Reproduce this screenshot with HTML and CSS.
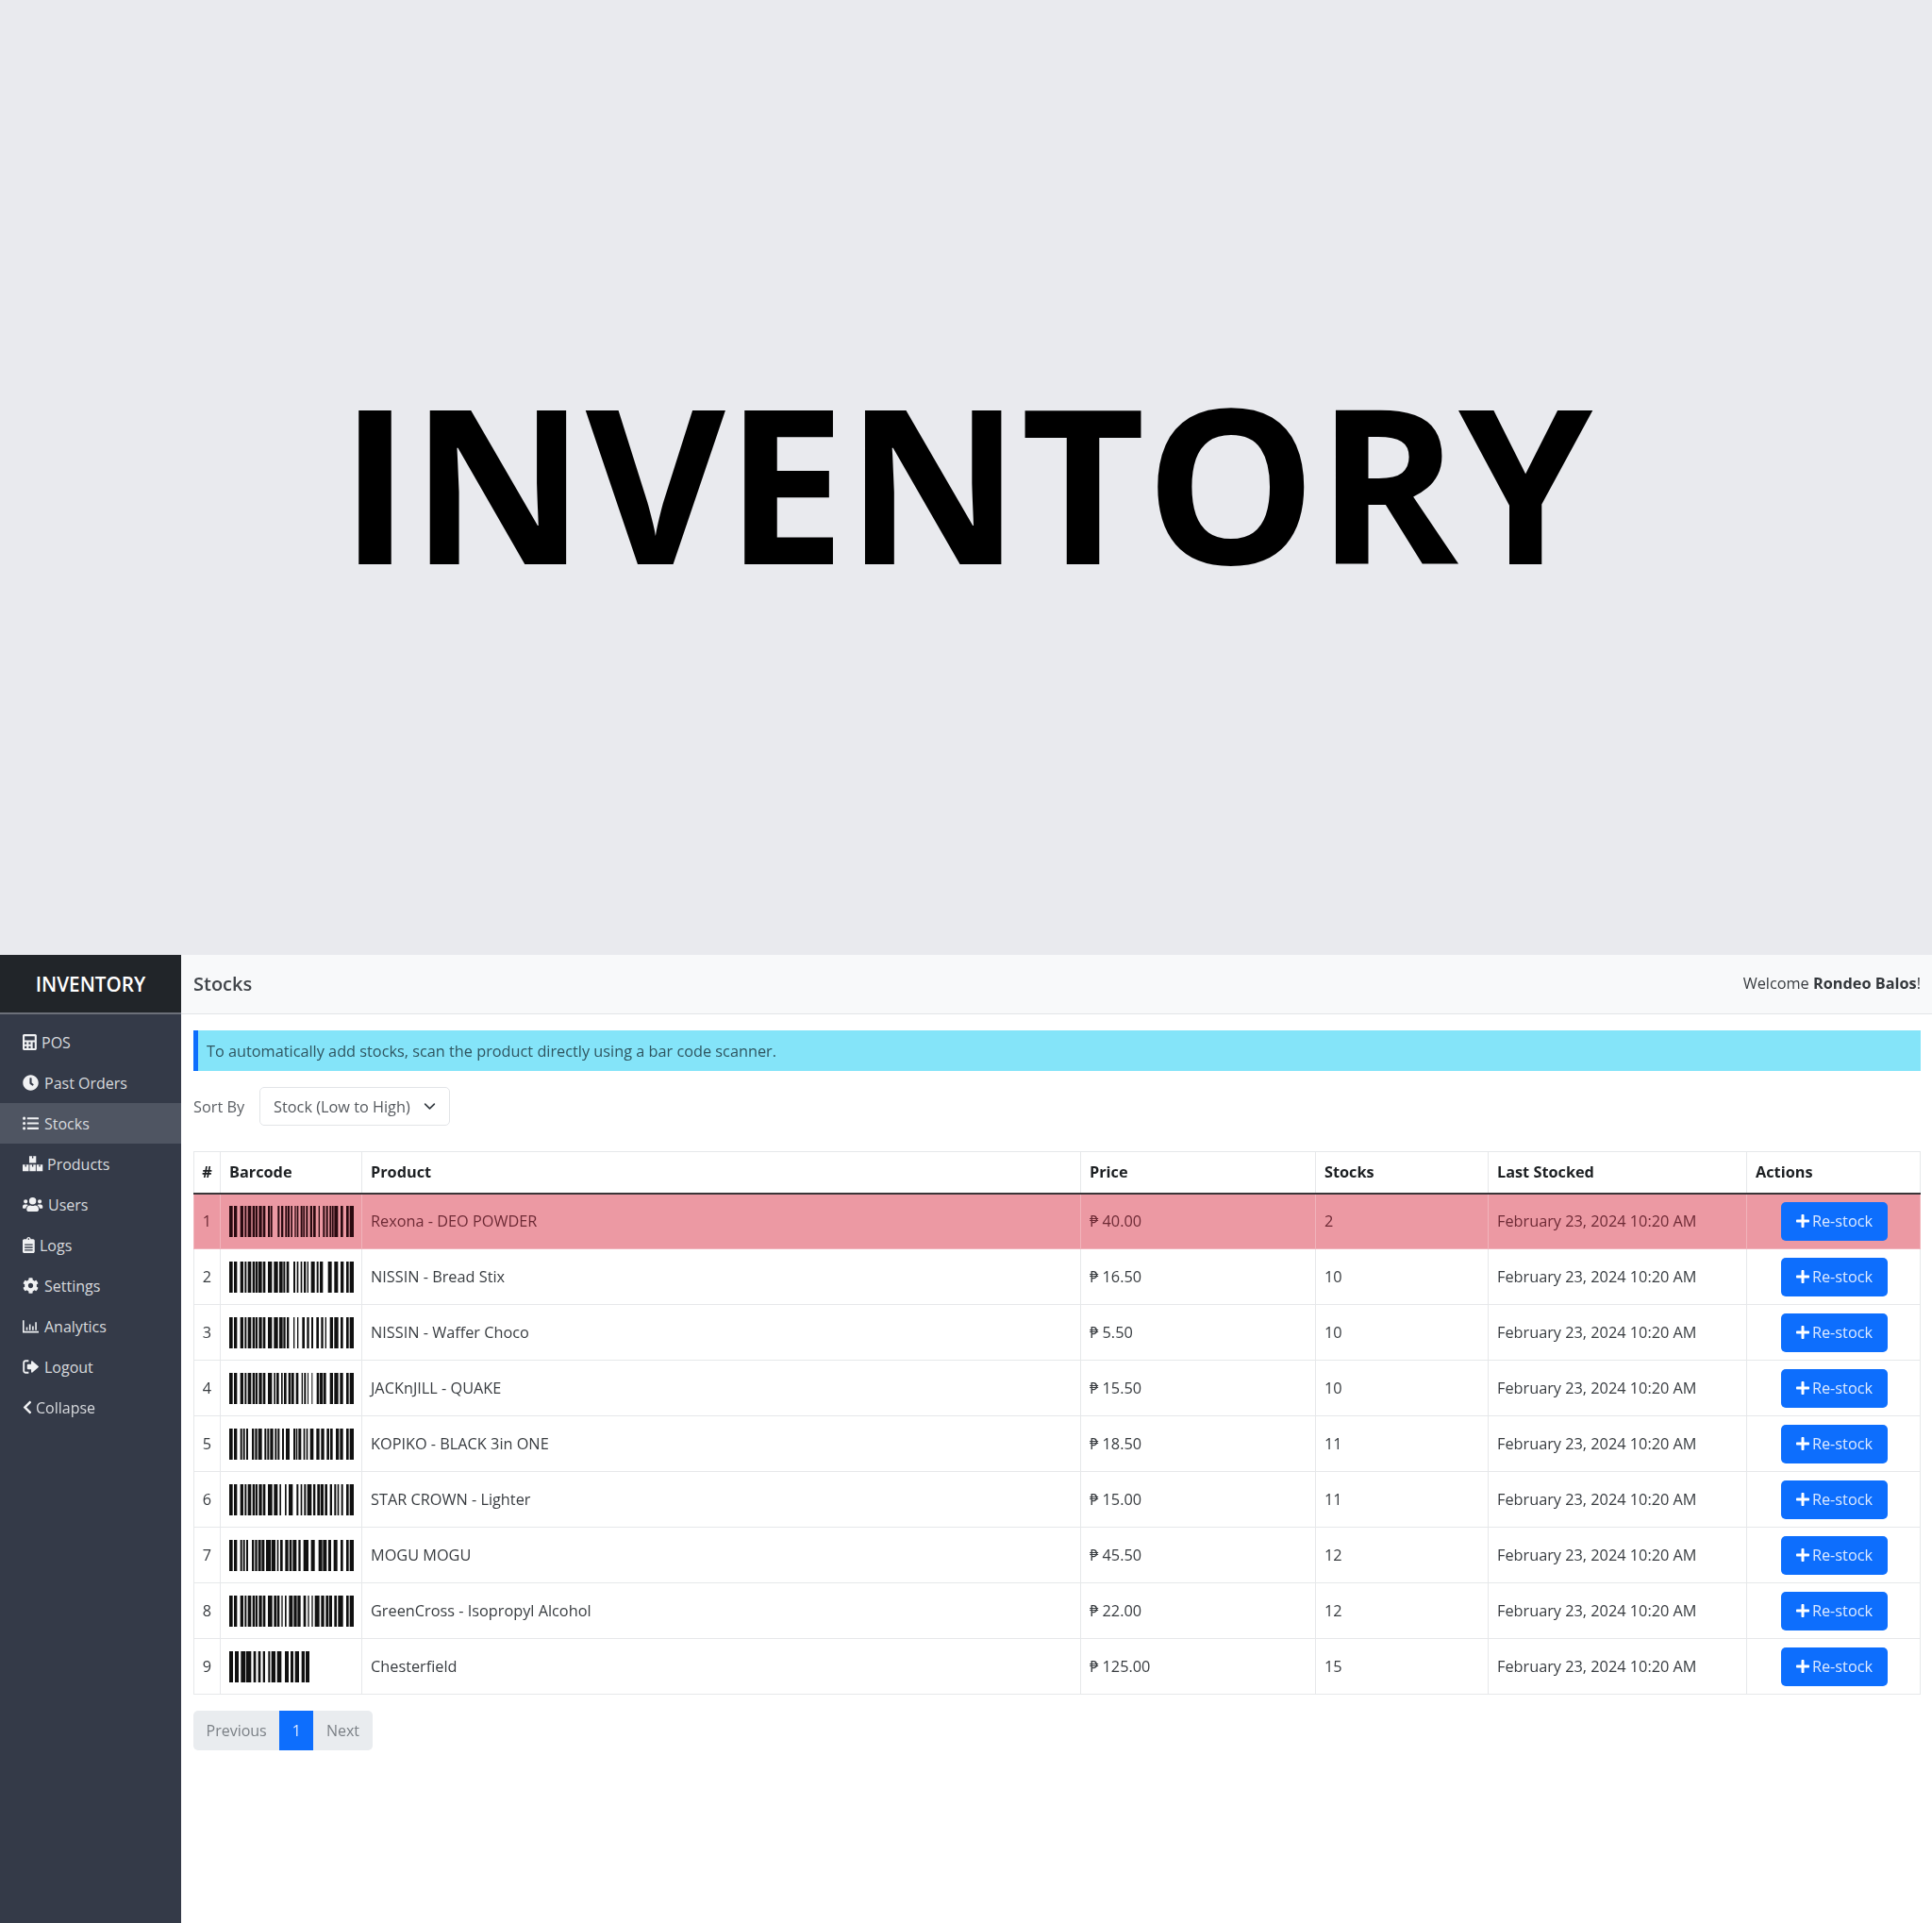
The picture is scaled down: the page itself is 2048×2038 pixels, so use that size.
FILE: index.html
```html
<!DOCTYPE html>
<html lang="en">
<head>
    <meta charset="UTF-8">
    <meta name="viewport" content="width=device-width, initial-scale=1.0">
    <title>Inventory</title>
    <link rel="stylesheet" href="styles.css">
</head>
<body>
    <svg class="icon-defs" width="0" height="0">
        <symbol id="i-plus" viewBox="0 0 448 512"><path d="M416 208H272V64c0-18-14-32-32-32h-32c-18 0-32 14-32 32v144H32c-18 0-32 14-32 32v32c0 18 14 32 32 32h144v144c0 18 14 32 32 32h32c18 0 32-14 32-32V304h144c18 0 32-14 32-32v-32c0-18-14-32-32-32z"/></symbol>
    </svg>

    <div class="banner"><h1>INVENTORY</h1></div>

    <div class="app">
        <aside class="sidebar">
            <div class="brand">INVENTORY</div>
            <nav class="nav">
                <a class="nav-item"><svg class="nav-icon" width="16" viewBox="0 0 448 512" preserveAspectRatio="xMinYMid"><path fill-rule="evenodd" d="M48 0h352c26 0 48 22 48 48v416c0 26-22 48-48 48H48c-26 0-48-22-48-48V48C0 22 22 0 48 0zm16 64v128h320V64zm0 192v64h64v-64zm128 0v64h64v-64zm128 0v192h64V256zM64 384v64h64v-64zm128 0v64h64v-64z"/></svg>POS</a>
                <a class="nav-item"><svg class="nav-icon" width="19" viewBox="0 0 512 512" preserveAspectRatio="xMinYMid"><path d="M256 8C119 8 8 119 8 256s111 248 248 248 248-111 248-248S393 8 256 8zm92.500 313l-20 25a16 16 0 0 1-22.500 2.500l-67-49.720a40 40 0 0 1-15-31.230V112a16 16 0 0 1 16-16h32a16 16 0 0 1 16 16v144l58 42.500a16 16 0 0 1 2.500 22.500z"/></svg>Past Orders</a>
                <a class="nav-item active"><svg class="nav-icon" width="19" viewBox="0 0 512 512" preserveAspectRatio="xMinYMid"><path d="M48 48a48 48 0 1 0 0 96 48 48 0 0 0 0-96zm0 160a48 48 0 1 0 0 96 48 48 0 0 0 0-96zm0 160a48 48 0 1 0 0 96 48 48 0 0 0 0-96zM160 64h336c9 0 16 7 16 16v32c0 9-7 16-16 16H160c-9 0-16-7-16-16V80c0-9 7-16 16-16zm0 160h336c9 0 16 7 16 16v32c0 9-7 16-16 16H160c-9 0-16-7-16-16v-32c0-9 7-16 16-16zm0 160h336c9 0 16 7 16 16v32c0 9-7 16-16 16H160c-9 0-16-7-16-16v-32c0-9 7-16 16-16z"/></svg>Stocks</a>
                <a class="nav-item"><svg class="nav-icon" width="22" viewBox="0 0 640 512" preserveAspectRatio="xMinYMid"><path d="M210 8h220v220H210zM0 280h195v210H0zM222 280h196v210H222zM445 280h195v210H445z"/><path d="M300 8h40v70h-40zM78 280h40v65H78zM300 280h40v65h-40zM522 280h40v65h-40z" fill="#343a48"/></svg>Products</a>
                <a class="nav-item"><svg class="nav-icon" width="23" viewBox="0 0 640 512" preserveAspectRatio="xMinYMid"><path d="M96 224a64 64 0 1 0 0-128 64 64 0 0 0 0 128zm448 0a64 64 0 1 0 0-128 64 64 0 0 0 0 128zm32 32h-64c-18 0-34 7-45 19 40 22 69 62 75 109h66c18 0 32-14 32-32v-32c0-35-29-64-64-64zm-256 0a112 112 0 1 0 0-224 112 112 0 0 0 0 224zm77 32h-8c-21 10-44 16-69 16s-48-6-69-16h-8c-64 0-115 52-115 115v29c0 26 21 48 48 48h288c27 0 48-22 48-48v-29c0-63-51-115-115-115zM173 275c-11-12-27-19-45-19H64c-35 0-64 29-64 64v32c0 18 14 32 32 32h66c6-47 35-87 75-109z"/></svg>Users</a>
                <a class="nav-item"><svg class="nav-icon" width="14" viewBox="0 0 384 512" preserveAspectRatio="xMinYMid"><path fill-rule="evenodd" d="M336 64h-80c0-35-29-64-64-64s-64 29-64 64H48C22 64 0 86 0 112v352c0 26 22 48 48 48h288c26 0 48-22 48-48V112c0-26-22-48-48-48zM192 40a24 24 0 1 1 0 48 24 24 0 0 1 0-48zM64 224h256v40H64zm0 88h256v40H64zm0 88h256v40H64z"/></svg>Logs</a>
                <a class="nav-item"><svg class="nav-icon" width="19" viewBox="0 0 512 512" preserveAspectRatio="xMinYMid"><path d="M487.400 315.700l-42.600-24.600c4.300-23.200 4.300-47 0-70.200l42.600-24.600c4.900-2.800 7.100-8.600 5.500-14-11.100-35.600-30-67.800-54.700-94.600-3.800-4.100-10-5.100-14.800-2.300L380.800 110c-17.900-15.400-38.500-27.300-60.800-35.100V25.800c0-5.600-3.900-10.500-9.400-11.700-36.700-8.200-74.300-7.800-109.200 0-5.500 1.200-9.400 6.100-9.400 11.700V75c-22.200 7.900-42.800 19.800-60.800 35.100L88.700 85.500c-4.900-2.800-11-1.900-14.800 2.300-24.700 26.700-43.600 58.900-54.700 94.600-1.700 5.400.6 11.200 5.500 14L67.300 221c-4.300 23.200-4.300 47 0 70.200l-42.600 24.600c-4.900 2.800-7.100 8.600-5.500 14 11.100 35.600 30 67.800 54.700 94.600 3.800 4.100 10 5.100 14.800 2.300l42.600-24.600c17.900 15.400 38.500 27.300 60.800 35.100v49.200c0 5.600 3.900 10.500 9.400 11.700 36.700 8.200 74.300 7.800 109.200 0 5.500-1.200 9.400-6.100 9.400-11.700v-49.200c22.200-7.900 42.800-19.800 60.800-35.100l42.600 24.600c4.900 2.800 11 1.900 14.800-2.300 24.700-26.700 43.600-58.900 54.700-94.600 1.500-5.500-.7-11.300-5.600-14.100zM256 336c-44.100 0-80-35.900-80-80s35.900-80 80-80 80 35.900 80 80-35.900 80-80 80z"/></svg>Settings</a>
                <a class="nav-item"><svg class="nav-icon" width="19" viewBox="0 0 512 512" preserveAspectRatio="xMinYMid"><path d="M0 64h48v352h464v48H0zM112 288h48v96h-48zM208 192h48v192h-48zM304 256h48v128h-48zM400 128h48v256h-48z"/></svg>Analytics</a>
                <a class="nav-item"><svg class="nav-icon" width="19" viewBox="0 0 512 512" preserveAspectRatio="xMinYMid"><path d="M192 96H96c-18 0-32 14-32 32v256c0 18 14 32 32 32h96v56H96c-49 0-88-39-88-88V128c0-49 39-88 88-88h96zM312 72l192 168c9 8 9 24 0 32L312 440c-15 13-40 3-40-16V336H168c-13 0-24-11-24-24V200c0-13 11-24 24-24h104V88c0-19 25-29 40-16z"/></svg>Logout</a>
                <a class="nav-item"><svg class="nav-icon" width="10" viewBox="0 0 320 512" preserveAspectRatio="xMinYMid"><path d="M34 239L228 46c9-10 25-10 34 0l23 22c9 10 9 25 0 34L131 256l154 154c9 9 9 24 0 34l-23 22c-9 10-25 10-34 0L34 273c-9-9-9-25 0-34z"/></svg>Collapse</a>
            </nav>
        </aside>

        <div class="main">
            <header class="topbar">
                <span class="page-title">Stocks</span>
                <span class="welcome">Welcome <b>Rondeo Balos</b>!</span>
            </header>

            <div class="content">
                <div class="alert">To automatically add stocks, scan the product directly using a bar code scanner.</div>

                <div class="sort-row">
                    <span class="sort-label">Sort By</span>
                    <div class="select">Stock (Low to High)
                        <svg class="select-arrow" viewBox="0 0 16 16"><path d="M2 5l6 6 6-6" fill="none" stroke="#343a40" stroke-width="2" stroke-linecap="round" stroke-linejoin="round"/></svg>
                    </div>
                </div>

                <table class="stock-table">
                    <colgroup>
                        <col class="c-num"><col class="c-barcode"><col class="c-product"><col class="c-price"><col class="c-stocks"><col class="c-date"><col class="c-actions">
                    </colgroup>
                    <thead>
                        <tr><th class="center">#</th><th>Barcode</th><th>Product</th><th>Price</th><th>Stocks</th><th>Last Stocked</th><th>Actions</th></tr>
                    </thead>
                    <tbody>
                        <tr class="low">
                            <td class="center">1</td>
                            <td><svg class="barcode" viewBox="0 0 396 33" preserveAspectRatio="none"><line x2="396" y1="16.500" y2="16.500" stroke-dasharray="11 4 10 10 10 4 6 4 11 4 7 2 7 4 10 3 8 8 6 2 6 17 6 5 7 6 6 2 6 4 5 7 4 3 5 7 6 2 5 4 6 7 7 3 8 9 4 10 6 4 6 5 6 2 5 2 12 8 8 10 8 3 13 99"/></svg></td>
                            <td>Rexona - DEO POWDER</td>
                            <td>₱ 40.00</td>
                            <td>2</td>
                            <td>February 23, 2024 10:20 AM</td>
                            <td><a class="btn-restock"><svg class="btn-icon"><use href="#i-plus"/></svg>Re-stock</a></td>
                        </tr>
                        <tr>
                            <td class="center">2</td>
                            <td><svg class="barcode" viewBox="0 0 396 33" preserveAspectRatio="none"><line x2="396" y1="16.500" y2="16.500" stroke-dasharray="11 4 10 10 10 4 6 4 11 4 7 2 7 2 12 3 8 8 13 6 13 4 11 2 6 4 8 14 6 5 5 7 5 5 7 4 4 8 12 6 6 4 10 16 12 8 12 8 10 8 8 3 13 99"/></svg></td>
                            <td>NISSIN - Bread Stix</td>
                            <td>₱ 16.50</td>
                            <td>10</td>
                            <td>February 23, 2024 10:20 AM</td>
                            <td><a class="btn-restock"><svg class="btn-icon"><use href="#i-plus"/></svg>Re-stock</a></td>
                        </tr>
                        <tr>
                            <td class="center">3</td>
                            <td><svg class="barcode" viewBox="0 0 396 33" preserveAspectRatio="none"><line x2="396" y1="16.500" y2="16.500" stroke-dasharray="11 4 10 10 10 4 6 4 11 4 7 2 7 4 10 3 8 8 13 6 13 4 11 2 7 4 7 14 4 8 4 12 8 7 7 7 6 10 8 7 7 6 4 11 10 4 13 7 8 10 8 3 13 99"/></svg></td>
                            <td>NISSIN - Waffer Choco</td>
                            <td>₱ 5.50</td>
                            <td>10</td>
                            <td>February 23, 2024 10:20 AM</td>
                            <td><a class="btn-restock"><svg class="btn-icon"><use href="#i-plus"/></svg>Re-stock</a></td>
                        </tr>
                        <tr>
                            <td class="center">4</td>
                            <td><svg class="barcode" viewBox="0 0 396 33" preserveAspectRatio="none"><line x2="396" y1="16.500" y2="16.500" stroke-dasharray="11 4 10 10 10 4 6 4 11 4 7 2 7 4 10 3 8 8 13 6 5 3 8 7 5 4 8 6 8 2 8 6 8 10 4 4 6 5 3 10 3 13 8 2 9 2 9 12 10 4 13 5 10 10 8 3 13 99"/></svg></td>
                            <td>JACKnJILL - QUAKE</td>
                            <td>₱ 15.50</td>
                            <td>10</td>
                            <td>February 23, 2024 10:20 AM</td>
                            <td><a class="btn-restock"><svg class="btn-icon"><use href="#i-plus"/></svg>Re-stock</a></td>
                        </tr>
                        <tr>
                            <td class="center">5</td>
                            <td><svg class="barcode" viewBox="0 0 396 33" preserveAspectRatio="none"><line x2="396" y1="16.500" y2="16.500" stroke-dasharray="11 4 10 10 6 3 6 4 6 12 7 3 7 3 12 8 6 3 6 3 10 5 6 3 6 8 6 6 12 12 6 2 5 3 9 7 5 4 5 7 11 9 10 5 10 8 8 3 8 10 10 3 10 10 8 3 13 99"/></svg></td>
                            <td>KOPIKO - BLACK 3in ONE</td>
                            <td>₱ 18.50</td>
                            <td>11</td>
                            <td>February 23, 2024 10:20 AM</td>
                            <td><a class="btn-restock"><svg class="btn-icon"><use href="#i-plus"/></svg>Re-stock</a></td>
                        </tr>
                        <tr>
                            <td class="center">6</td>
                            <td><svg class="barcode" viewBox="0 0 396 33" preserveAspectRatio="none"><line x2="396" y1="16.500" y2="16.500" stroke-dasharray="11 4 10 10 10 4 6 4 11 4 7 2 7 4 10 3 8 8 14 5 12 6 5 12 5 7 13 12 6 7 5 6 6 4 14 5 7 6 9 2 9 4 8 8 7 7 6 4 5 7 6 10 8 3 13 99"/></svg></td>
                            <td>STAR CROWN - Lighter</td>
                            <td>₱ 15.00</td>
                            <td>11</td>
                            <td>February 23, 2024 10:20 AM</td>
                            <td><a class="btn-restock"><svg class="btn-icon"><use href="#i-plus"/></svg>Re-stock</a></td>
                        </tr>
                        <tr>
                            <td class="center">7</td>
                            <td><svg class="barcode" viewBox="0 0 396 33" preserveAspectRatio="none"><line x2="396" y1="16.500" y2="16.500" stroke-dasharray="11 4 10 10 6 3 6 4 6 12 7 3 7 3 9 2 9 5 15 2 13 5 5 5 8 8 10 3 8 3 12 6 7 9 16 8 12 12 12 2 12 5 9 8 12 10 8 10 8 3 13 99"/></svg></td>
                            <td>MOGU MOGU</td>
                            <td>₱ 45.50</td>
                            <td>12</td>
                            <td>February 23, 2024 10:20 AM</td>
                            <td><a class="btn-restock"><svg class="btn-icon"><use href="#i-plus"/></svg>Re-stock</a></td>
                        </tr>
                        <tr>
                            <td class="center">8</td>
                            <td><svg class="barcode" viewBox="0 0 396 33" preserveAspectRatio="none"><line x2="396" y1="16.500" y2="16.500" stroke-dasharray="11 4 10 10 10 4 6 4 11 4 7 2 7 4 10 3 8 8 14 5 8 2 8 6 4 7 5 8 12 3 10 2 10 9 8 6 4 8 4 6 15 5 10 5 9 2 9 7 8 4 16 10 8 3 13 99"/></svg></td>
                            <td>GreenCross - Isopropyl Alcohol</td>
                            <td>₱ 22.00</td>
                            <td>12</td>
                            <td>February 23, 2024 10:20 AM</td>
                            <td><a class="btn-restock"><svg class="btn-icon"><use href="#i-plus"/></svg>Re-stock</a></td>
                        </tr>
                        <tr>
                            <td class="center">9</td>
                            <td><svg class="barcode short" viewBox="0 0 255 33" preserveAspectRatio="none"><line x2="255" y1="16.500" y2="16.500" stroke-dasharray="12 6 12 7 15 2 16 7 8 7 8 7 7 10 6 4 13 5 14 11 12 6 9 5 13 8 10 3 12 99"/></svg></td>
                            <td>Chesterfield</td>
                            <td>₱ 125.00</td>
                            <td>15</td>
                            <td>February 23, 2024 10:20 AM</td>
                            <td><a class="btn-restock"><svg class="btn-icon"><use href="#i-plus"/></svg>Re-stock</a></td>
                        </tr>
                    </tbody>
                </table>

                <div class="pager">
                    <a class="page-link">Previous</a>
                    <a class="page-link current">1</a>
                    <a class="page-link">Next</a>
                </div>
            </div>
        </div>
    </div>
</body>
</html>
```

FILE: styles.css
```css
* {
    box-sizing: border-box;
}

body {
    margin: 0;
    font-family: "Open Sans", "Noto Sans", Arial, sans-serif;
    font-size: 16.3px;
    color: #383c40;
    background-color: #fff;
}

.icon-defs {
    display: block;
    height: 0;
}

.banner {
    height: 1012px;
    background-color: #e9eaee;
    display: flex;
    justify-content: center;
    align-items: center;
}

.banner h1 {
    margin: 0;
    padding-top: 8px;
    font-size: 228px;
    font-weight: 700;
    line-height: 1;
    color: #000;
}

/* the app screenshot below the banner is slightly soft */
.app {
    display: flex;
    height: 1026px;
    filter: blur(0.5px);
}

/* sidebar */
.sidebar {
    width: 192px;
    flex: none;
    background-color: #343a48;
}

.brand {
    height: 63px;
    background-color: #212529;
    border-bottom: 2px solid #6c7079;
    color: #fff;
    font-size: 20.7px;
    font-weight: 600;
    display: flex;
    align-items: center;
    justify-content: center;
}

.nav {
    padding-top: 8px;
}

.nav-item {
    height: 43px;
    padding-left: 24px;
    display: flex;
    align-items: center;
    gap: 4px;
    color: #d8dade;
    font-size: 16px;
}

.nav-item.active {
    background-color: #4f5562;
}

.nav-icon {
    height: 17px;
    fill: #f0f1f3;
}

/* main area */
.main {
    flex: 1;
    min-width: 0;
}

.topbar {
    height: 63px;
    background-color: #f8f9fa;
    border-bottom: 1px solid #e3e5e8;
    padding: 0 12px 2px 13px;
    display: flex;
    justify-content: space-between;
    align-items: center;
}

.page-title {
    font-size: 20px;
    font-weight: 600;
    color: #41454a;
}

.welcome b {
    font-weight: 700;
    color: #33373b;
}

.content {
    padding: 17px 12px 17px 13px;
}

.alert {
    height: 43px;
    background-color: #84e4f9;
    border-left: 5px solid #0d6efd;
    padding-left: 9px;
    display: flex;
    align-items: center;
    color: #2f5560;
}

.sort-row {
    margin-top: 17px;
    display: flex;
    align-items: center;
    gap: 16px;
}

.sort-label {
    color: #5d6166;
}

.select {
    width: 202px;
    height: 41px;
    border: 1px solid #e2e4e7;
    border-radius: 5px;
    padding: 0 14px;
    display: flex;
    align-items: center;
    justify-content: space-between;
    color: #55595e;
}

.select-arrow {
    width: 13px;
    height: 13px;
}

.stock-table {
    margin-top: 27px;
    width: 1830px;
    border-collapse: collapse;
    table-layout: fixed;
}

.c-num { width: 28px; }
.c-barcode { width: 150px; }
.c-product { width: 762px; }
.c-price { width: 249px; }
.c-stocks { width: 183px; }
.c-date { width: 274px; }
.c-actions { width: 184px; }

.stock-table th,
.stock-table td {
    border: 1px solid #e6e8ea;
    padding: 0 9px;
    text-align: left;
    white-space: nowrap;
}

.stock-table th {
    height: 44px;
    font-weight: 700;
    color: #1c1f22;
    border-bottom: 2px solid #3a3538;
}

.stock-table td {
    height: 59px;
}

.stock-table .center {
    padding: 0;
    text-align: center;
}

.stock-table tr.low td {
    background-color: #ec99a3;
    color: #6d2a35;
    border-color: #f1b4bb;
}

.barcode {
    display: block;
    width: 132px;
    height: 33px;
}

.barcode.short {
    width: 85px;
}

.barcode line {
    stroke: #111;
    stroke-width: 33;
}

.low .barcode line {
    stroke: #2a0a10;
}

.btn-restock {
    width: 113px;
    height: 41px;
    margin-left: 27px;
    background-color: #0d6efd;
    border-radius: 5px;
    color: #dce9ff;
    display: flex;
    align-items: center;
    justify-content: center;
    gap: 3px;
}

.btn-icon {
    width: 14px;
    height: 16px;
    fill: #fff;
}

/* pagination */
.pager {
    margin-top: 17px;
    display: inline-flex;
    height: 42px;
    border-radius: 5px;
    overflow: hidden;
    background-color: #e9ecef;
    font-size: 16px;
}

.page-link {
    padding: 0 13.5px;
    display: flex;
    align-items: center;
    color: #7b8086;
}

.page-link.current {
    background-color: #0d6efd;
    color: #dce9ff;
}
```
